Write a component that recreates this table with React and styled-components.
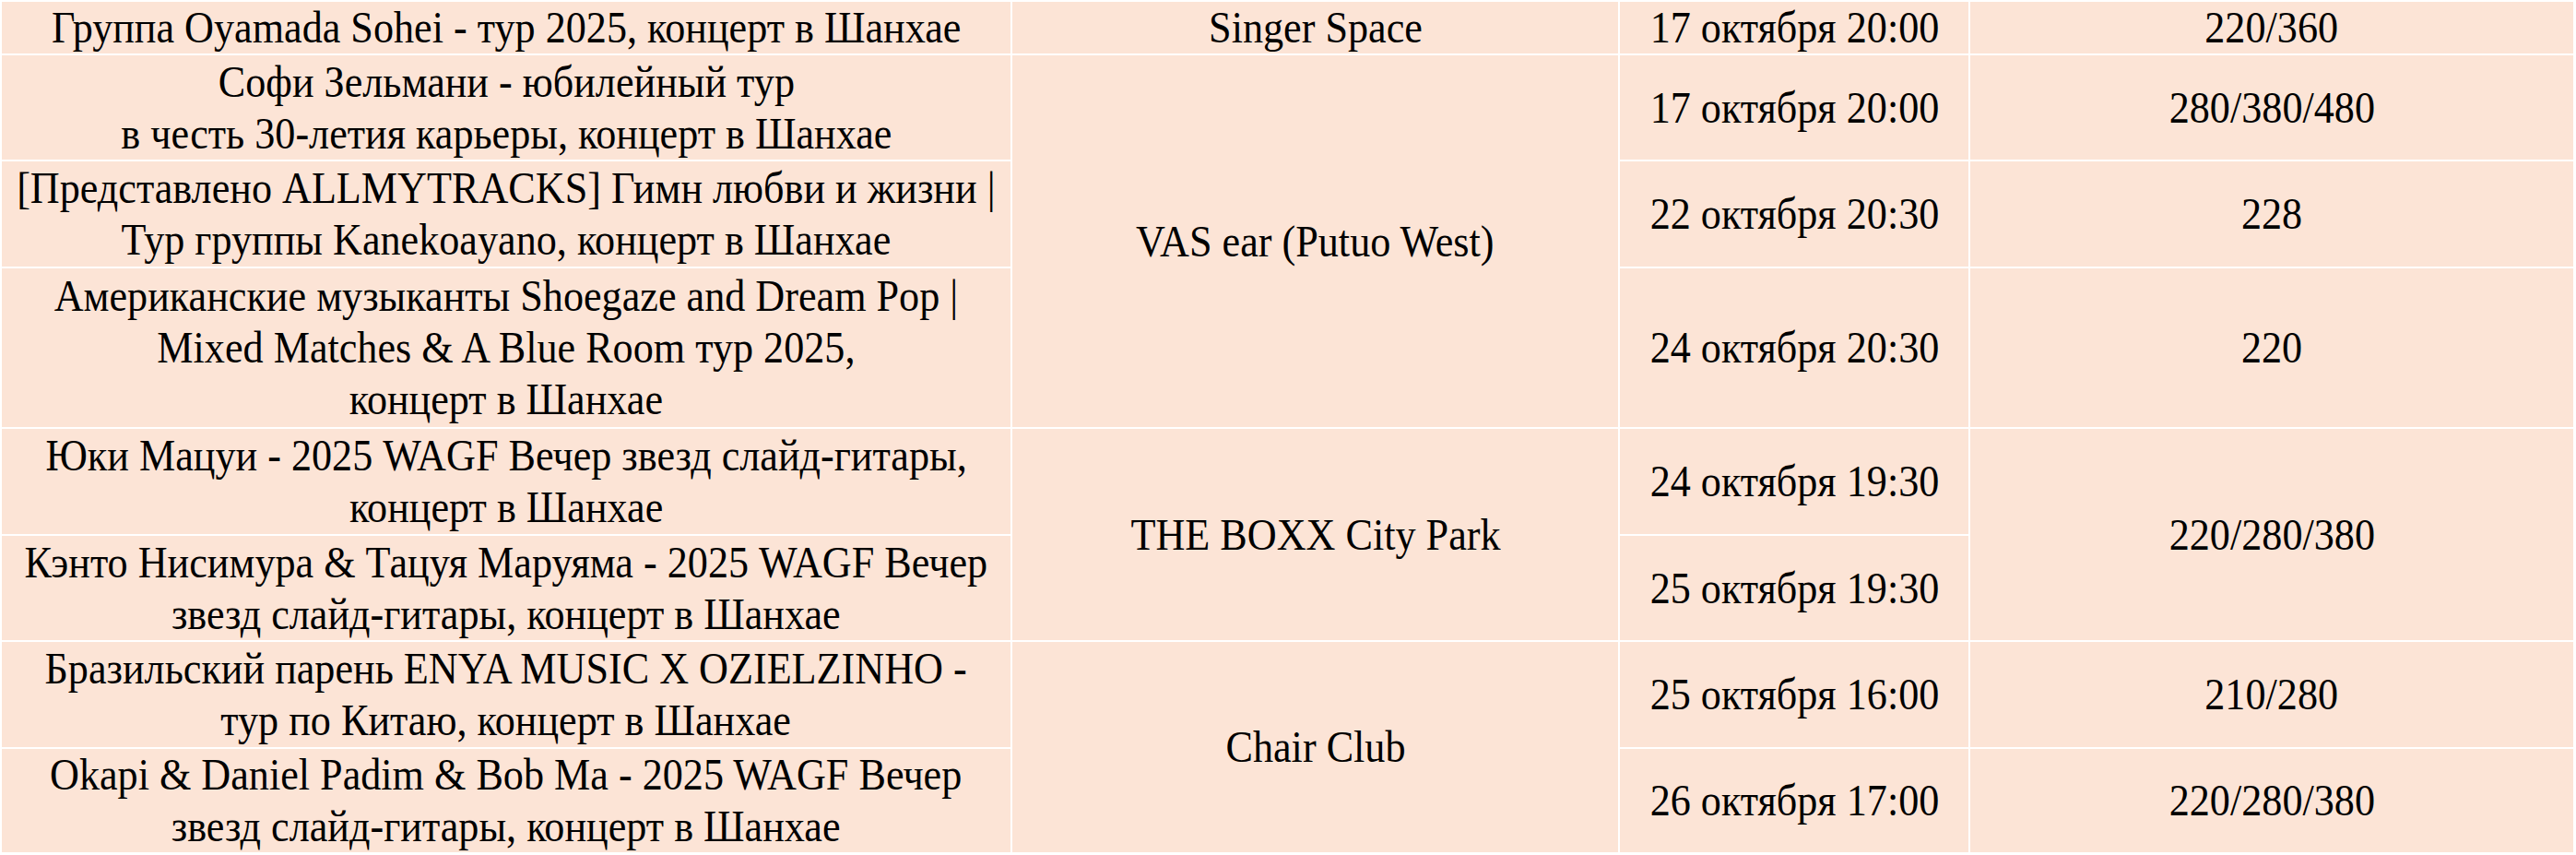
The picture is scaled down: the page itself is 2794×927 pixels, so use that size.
import React from 'react';
import styled, { createGlobalStyle } from 'styled-components';

const GlobalStyle = createGlobalStyle`
    html, body {
        margin: 0;
        padding: 0;
        background: #ffffff;
    }
    body {
        width: 2794px;
        height: 927px;
        overflow: hidden;
    }
`;

const Table = styled.table`
    border-collapse: separate;
    border-spacing: 2px;
    table-layout: fixed;
    width: 2793px;
    background: #ffffff;
    font-family: "Liberation Serif", "Times New Roman", serif;
    font-size: 48px;
    line-height: 56px;
    color: #000000;
`;

const Col = styled.col`
    width: ${(p) => p.$w}px;
`;

const Row = styled.tr`
    height: ${(p) => p.$h}px;
`;

const Cell = styled.td`
    background: #fce4d6;
    padding: 0;
    text-align: center;
    vertical-align: middle;
    white-space: nowrap;
    overflow: hidden;
`;

// narrow serif, like the exported sheet; negative margins keep long lines centred
const Text = styled.span`
    display: inline-block;
    margin: 0 -80px;
    transform: scaleX(0.92);
    transform-origin: center;
`;

const lines = (t) =>
    t.split('\n').map((l, i, arr) => (
        <React.Fragment key={i}>
            {l}
            {i < arr.length - 1 && <br />}
        </React.Fragment>
    ));

function Concerts() {
    return (
        <Table>
            <colgroup>
                <Col $w={1094} />
                <Col $w={657} />
                <Col $w={378} />
                <Col $w={654} />
            </colgroup>
            <tbody>
                <Row $h={56}>
                    <Cell><Text>Группа Oyamada Sohei - тур 2025, концерт в Шанхае</Text></Cell>
                    <Cell><Text>Singer Space</Text></Cell>
                    <Cell><Text>17 октября 20:00</Text></Cell>
                    <Cell><Text>220/360</Text></Cell>
                </Row>
                <Row $h={113}>
                    <Cell><Text>{lines('Софи Зельмани - юбилейный тур\nв честь 30-летия карьеры, концерт в Шанхае')}</Text></Cell>
                    <Cell rowSpan={3}><Text>VAS ear (Putuo West)</Text></Cell>
                    <Cell><Text>17 октября 20:00</Text></Cell>
                    <Cell><Text>280/380/480</Text></Cell>
                </Row>
                <Row $h={114}>
                    <Cell><Text>{lines('[Представлено ALLMYTRACKS] Гимн любви и жизни |\nТур группы Kanekoayano, концерт в Шанхае')}</Text></Cell>
                    <Cell><Text>22 октября 20:30</Text></Cell>
                    <Cell><Text>228</Text></Cell>
                </Row>
                <Row $h={172}>
                    <Cell><Text>{lines('Американские музыканты Shoegaze and Dream Pop |\nMixed Matches & A Blue Room тур 2025,\nконцерт в Шанхае')}</Text></Cell>
                    <Cell><Text>24 октября 20:30</Text></Cell>
                    <Cell><Text>220</Text></Cell>
                </Row>
                <Row $h={114}>
                    <Cell><Text>{lines('Юки Мацуи - 2025 WAGF Вечер звезд слайд-гитары,\nконцерт в Шанхае')}</Text></Cell>
                    <Cell rowSpan={2}><Text>THE BOXX City Park</Text></Cell>
                    <Cell><Text>24 октября 19:30</Text></Cell>
                    <Cell rowSpan={2}><Text>220/280/380</Text></Cell>
                </Row>
                <Row $h={113}>
                    <Cell><Text>{lines('Кэнто Нисимура & Тацуя Маруяма - 2025 WAGF Вечер\nзвезд слайд-гитары, концерт в Шанхае')}</Text></Cell>
                    <Cell><Text>25 октября 19:30</Text></Cell>
                </Row>
                <Row $h={114}>
                    <Cell><Text>{lines('Бразильский парень ENYA MUSIC X OZIELZINHO -\nтур по Китаю, концерт в Шанхае')}</Text></Cell>
                    <Cell rowSpan={2}><Text>Chair Club</Text></Cell>
                    <Cell><Text>25 октября 16:00</Text></Cell>
                    <Cell><Text>210/280</Text></Cell>
                </Row>
                <Row $h={111}>
                    <Cell><Text>{lines('Okapi & Daniel Padim & Bob Ma - 2025 WAGF Вечер\nзвезд слайд-гитары, концерт в Шанхае')}</Text></Cell>
                    <Cell><Text>26 октября 17:00</Text></Cell>
                    <Cell><Text>220/280/380</Text></Cell>
                </Row>
            </tbody>
        </Table>
    );
}

export default function App() {
    return (
        <>
            <GlobalStyle />
            <Concerts />
        </>
    );
}
